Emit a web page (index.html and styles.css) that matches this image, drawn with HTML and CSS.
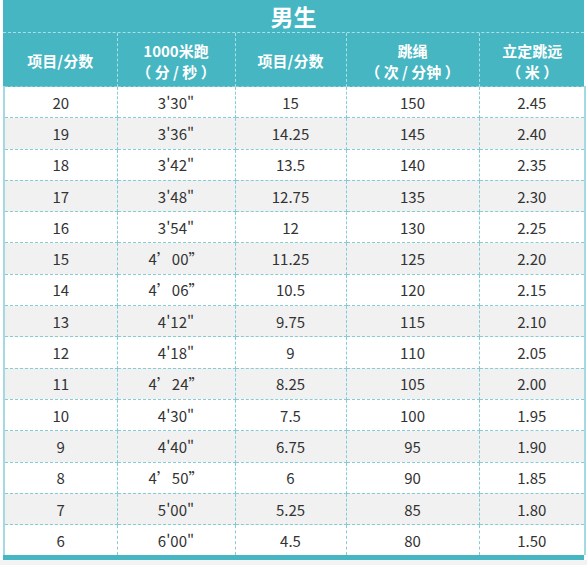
FILE: index.html
```html
<!DOCTYPE html>
<html lang="zh">
<head>
<meta charset="utf-8">
<link rel="stylesheet" href="styles.css">
</head>
<body>
<div class="sheet">
  <div class="title">男生</div>
  <table class="grid">
    <colgroup>
      <col class="c1"><col class="c2"><col class="c3"><col class="c4"><col class="c5">
    </colgroup>
    <thead>
      <tr>
        <th>项目/分数</th>
        <th>1000米跑<br>（ 分 / 秒 ）</th>
        <th>项目/分数</th>
        <th>跳绳<br>（ 次 / 分钟 ）</th>
        <th>立定跳远<br>（ 米 ）</th>
      </tr>
    </thead>
    <tbody>
      <tr><td>20</td><td>3'30"</td><td>15</td><td>150</td><td>2.45</td></tr>
      <tr><td>19</td><td>3'36"</td><td>14.25</td><td>145</td><td>2.40</td></tr>
      <tr><td>18</td><td>3'42"</td><td>13.5</td><td>140</td><td>2.35</td></tr>
      <tr><td>17</td><td>3'48"</td><td>12.75</td><td>135</td><td>2.30</td></tr>
      <tr><td>16</td><td>3'54"</td><td>12</td><td>130</td><td>2.25</td></tr>
      <tr><td>15</td><td>4’00”</td><td>11.25</td><td>125</td><td>2.20</td></tr>
      <tr><td>14</td><td>4’06”</td><td>10.5</td><td>120</td><td>2.15</td></tr>
      <tr><td>13</td><td>4'12"</td><td>9.75</td><td>115</td><td>2.10</td></tr>
      <tr><td>12</td><td>4'18"</td><td>9</td><td>110</td><td>2.05</td></tr>
      <tr><td>11</td><td>4’24”</td><td>8.25</td><td>105</td><td>2.00</td></tr>
      <tr><td>10</td><td>4'30"</td><td>7.5</td><td>100</td><td>1.95</td></tr>
      <tr><td>9</td><td>4'40"</td><td>6.75</td><td>95</td><td>1.90</td></tr>
      <tr><td>8</td><td>4’50”</td><td>6</td><td>90</td><td>1.85</td></tr>
      <tr><td>7</td><td>5'00"</td><td>5.25</td><td>85</td><td>1.80</td></tr>
      <tr><td>6</td><td>6'00"</td><td>4.5</td><td>80</td><td>1.50</td></tr>
    </tbody>
  </table>
</div>
<div class="foot"></div>
</body>
</html>
```
FILE: styles.css
```css
html, body {
  margin: 0;
  padding: 0;
  background: #ffffff;
}
body {
  font-family: "Noto Sans CJK SC", "Noto Sans", sans-serif;
  color: #333333;
}
.sheet {
  width: 581px;
  margin-left: 3px;
  background: #46b6c2;
  padding-bottom: 5px;
}
.title {
  height: 33px;
  line-height: 33px;
  text-align: center;
  color: #ffffff;
  font-weight: bold;
  font-size: 23px;
  border-bottom: 1px dashed #a9dfe5;
  box-sizing: border-box;
}
.grid {
  width: 581px;
  border-collapse: collapse;
  table-layout: fixed;
}
.c1 { width: 113px; }
.c2 { width: 118px; }
.c3 { width: 111px; }
.c4 { width: 133px; }
.c5 { width: 106px; }
.grid th {
  height: 51px;
  padding: 2px 0 0;
  color: #ffffff;
  font-weight: bold;
  font-size: 15px;
  line-height: 21px;
  border-left: 1px dashed #a9dfe5;
  border-right: 1px dashed #a9dfe5;
}
.grid th:first-child { border-left: none; }
.grid th:last-child { border-right: none; }
.grid td {
  height: 30.3px;
  padding: 0;
  text-align: center;
  font-size: 15px;
  background: #ffffff;
  border: 1px dashed #86ccd5;
}
.grid tbody tr:nth-child(even) td {
  background: #f1f1f1;
}
.grid td:first-child {
  border-left: 2px solid #a3d9e0;
}
.grid td:last-child {
  border-right: 2px solid #a3d9e0;
}
.grid tbody tr:last-child td {
  border-bottom: none;
}
.foot {
  height: 5px;
  background: #f3f3f3;
}
```
